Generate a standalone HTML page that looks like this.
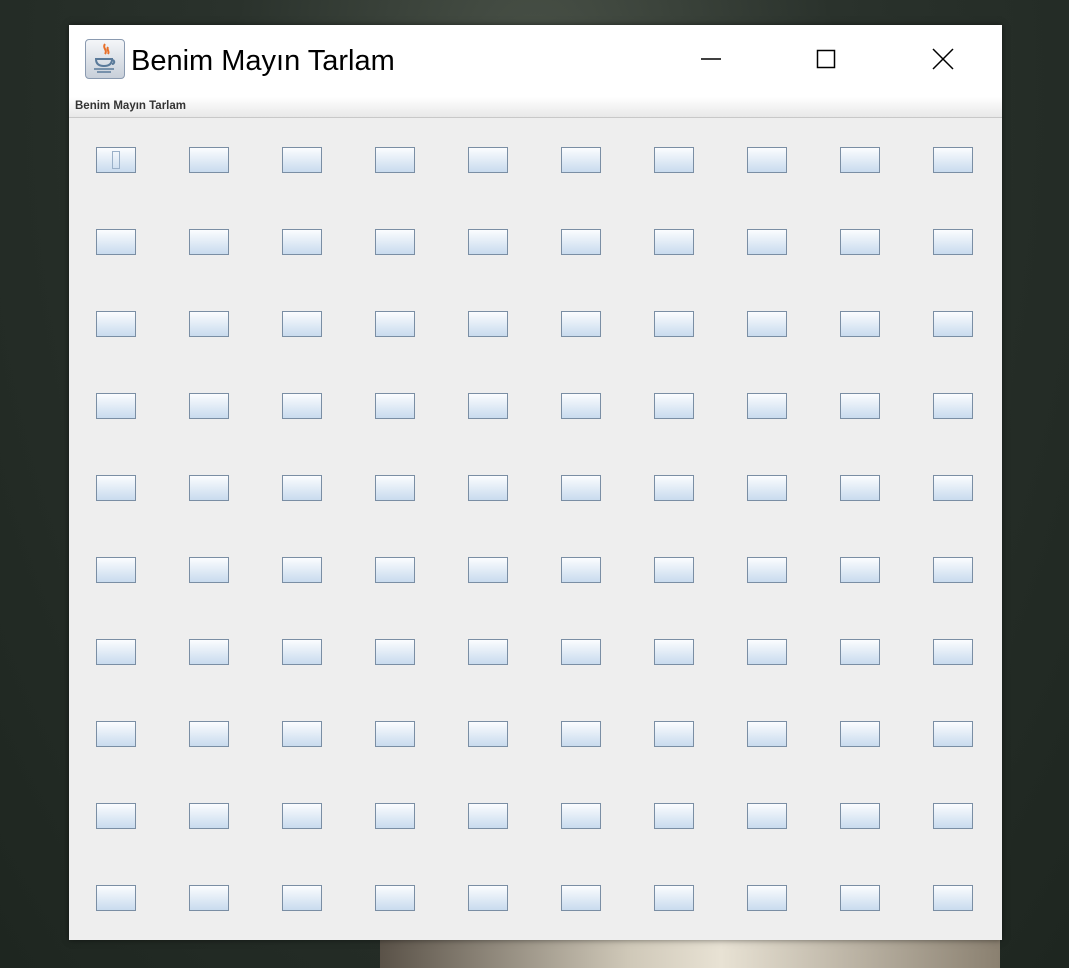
<!DOCTYPE html>
<html><head><style>
body{margin:0;width:1069px;height:968px;overflow:hidden;position:relative;font-family:"Liberation Sans",sans-serif;
background:radial-gradient(ellipse at 50% 10%,#4a5248 0%,#2a322c 40%,#1e2620 100%);}
.road{position:absolute;left:380px;top:935px;width:620px;height:33px;background:linear-gradient(90deg,#5a5248,#cfc8b8 40%,#e8e2d4 55%,#8a8070);}
.win{position:absolute;left:69px;top:25px;width:933px;height:915px;background:#eeeeee;box-shadow:0 0 6px rgba(0,0,0,.5);}
.title{position:absolute;left:0;top:0;width:933px;height:72px;background:#fff;}
.title .t{position:absolute;left:62px;top:20px;font-size:29px;font-family:"Liberation Sans",sans-serif;color:#000;}
.icon{position:absolute;left:16px;top:14px;width:38px;height:38px;border:1px solid #8a9ab0;border-radius:4px;background:linear-gradient(#f4f6f8,#c8d0da);}
.menu{position:absolute;left:0;top:72px;width:933px;height:20px;background:linear-gradient(#fff,#e8e8e8);border-bottom:1px solid #c8c8c8;}
.menu span{position:absolute;left:6px;top:3px;font-size:11.5px;font-weight:bold;color:#333;}
.b{position:absolute;width:38px;height:24px;border:1px solid #7a8ea4;background:linear-gradient(#fbfdff 0%,#eef4fa 25%,#c9dbee 100%);}
</style></head><body>
<div class="road"></div>
<div class="win">
<div class="title">
<div class="icon"><svg width="38" height="38" viewBox="0 0 38 38"><path d="M19 4c-3 4 3 6 0 10M22 7c-2 3 2 4 0 7" stroke="#e8702a" stroke-width="2" fill="none"/><path d="M10 19h16c0 5-3 7-8 7s-8-2-8-7zM26 20c3 0 3 4 0 4" stroke="#5a7a9a" stroke-width="2" fill="none"/><path d="M8 29h20M11 32h14" stroke="#5a7a9a" stroke-width="1.5"/></svg></div>
<div class="t">Benim Mayın Tarlam</div>
<svg style="position:absolute;left:620px;top:20px" width="300" height="30"><line x1="12" y1="14" x2="32" y2="14" stroke="#000" stroke-width="1.5"/><rect x="128.5" y="5.5" width="17" height="17" fill="none" stroke="#000" stroke-width="1.5"/><path d="M244 4l20 20M264 4l-20 20" stroke="#000" stroke-width="1.5"/></svg>
</div>
<div class="menu"><span>Benim Mayın Tarlam</span></div>
<div id="g"></div>
</div>
<script>
var h='';for(var r=0;r<10;r++)for(var c=0;c<10;c++)h+='<div class="b" style="left:'+(27+c*93)+'px;top:'+(122+r*82)+'px"></div>';
document.getElementById('g').innerHTML=h;
</script>
<div style="position:absolute;left:112px;top:151px;width:6px;height:16px;border:1px solid #9ab0c8;"></div>
</body></html>
